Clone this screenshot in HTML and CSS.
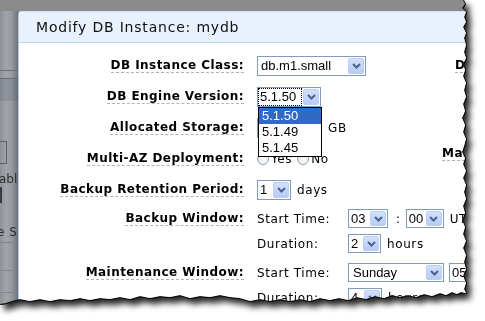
FILE: index.html
```html
<!DOCTYPE html>
<html>
  <head>
    <meta charset="utf-8">
    <title>Modify DB Instance: mydb</title>
    <link rel="stylesheet" href="styles.css">
  </head>
  <body>
    <div class="shot">
      <div class="paper">
        <div class="backdrop">
          <div class="bd-top"></div>
          <div class="bd-s59"></div>
          <div class="bd-rule"></div>
          <div class="bd-s7"></div>
          <div class="bd-rule"></div>
          <div class="bd-band"></div>
          <div class="bd-s40"></div>
          <div class="bd-box"></div>
          <div class="bd-s9"></div>
          <div class="bd-text">abl</div>
          <div class="bd-s1"></div>
          <div class="bd-bar"></div>
          <div class="bd-s23"></div>
          <div class="bd-text bd-text-s">e S</div>
          <div class="bd-s3"></div>
          <div class="bd-rule bd-rule-faint"></div>
          <div class="bd-s27"></div>
          <div class="bd-rule bd-rule-faint"></div>
          <div class="bd-s21"></div>
          <div class="bd-rule bd-rule-faint"></div>
        </div>

        <div class="stage">
          <div class="dialog">
            <div class="dialog-head">Modify DB Instance: mydb</div>
            <div class="dialog-body">

              <div class="row">
                <div class="lab"><span>DB Instance Class:</span></div>
                <div class="ctl">
                  <div class="sel sel-class">
                    <span class="sel-val">db.m1.small</span>
                    <span class="sel-btn"><svg width="9" height="6" viewBox="0 0 9 6"><polyline points="1,1 4.5,4.5 8,1" fill="none" stroke="#4d6185" stroke-width="2"/></svg></span>
                  </div>
                </div>
                <div class="far"><span class="far-indent">DB Parameter Group:</span></div>
              </div>

              <div class="row">
                <div class="lab"><span>DB Engine Version:</span></div>
                <div class="ctl">
                  <div class="drop">
                    <div class="sel sel-engine">
                      <span class="sel-val sel-focus">5.1.50</span>
                      <span class="sel-btn"><svg width="9" height="6" viewBox="0 0 9 6"><polyline points="1,1 4.5,4.5 8,1" fill="none" stroke="#4d6185" stroke-width="2"/></svg></span>
                    </div>
                    <ul class="list">
                      <li class="list-on">5.1.50</li>
                      <li>5.1.49</li>
                      <li>5.1.45</li>
                    </ul>
                  </div>
                </div>
              </div>

              <div class="row">
                <div class="lab"><span>Allocated Storage:</span></div>
                <div class="ctl">
                  <div class="field">5</div>
                  <span class="txt after">GB</span>
                </div>
              </div>

              <div class="row">
                <div class="lab"><span>Multi-AZ Deployment:</span></div>
                <div class="ctl">
                  <span class="radio"></span><span class="txt">Yes</span>
                  <span class="radio radio-next"></span><span class="txt">No</span>
                </div>
                <div class="far"><span class="far-up">Master Password:</span></div>
              </div>

              <div class="row">
                <div class="lab"><span>Backup Retention Period:</span></div>
                <div class="ctl wide">
                  <div class="sel sel-num">
                    <span class="sel-val">1</span>
                    <span class="sel-btn"><svg width="9" height="6" viewBox="0 0 9 6"><polyline points="1,1 4.5,4.5 8,1" fill="none" stroke="#4d6185" stroke-width="2"/></svg></span>
                  </div>
                  <span class="txt after">days</span>
                </div>
              </div>

              <div class="row multi multi-gap">
                <div class="lab"><span>Backup Window:</span></div>
                <div class="ctl wide stack">
                  <div class="sub">
                    <span class="txt sublab">Start Time:</span>
                    <div class="sel sel-sm sel-hh">
                      <span class="sel-val">03</span>
                      <span class="sel-btn"><svg width="9" height="6" viewBox="0 0 9 6"><polyline points="1,1 4.5,4.5 8,1" fill="none" stroke="#4d6185" stroke-width="2"/></svg></span>
                    </div>
                    <span class="txt colon">:</span>
                    <div class="sel sel-sm sel-mm">
                      <span class="sel-val">00</span>
                      <span class="sel-btn"><svg width="9" height="6" viewBox="0 0 9 6"><polyline points="1,1 4.5,4.5 8,1" fill="none" stroke="#4d6185" stroke-width="2"/></svg></span>
                    </div>
                    <span class="txt after">UTC</span>
                  </div>
                  <div class="sub">
                    <span class="txt sublab">Duration:</span>
                    <div class="sel sel-sm sel-dur">
                      <span class="sel-val">2</span>
                      <span class="sel-btn"><svg width="9" height="6" viewBox="0 0 9 6"><polyline points="1,1 4.5,4.5 8,1" fill="none" stroke="#4d6185" stroke-width="2"/></svg></span>
                    </div>
                    <span class="txt after">hours</span>
                  </div>
                </div>
              </div>

              <div class="row multi">
                <div class="lab"><span>Maintenance Window:</span></div>
                <div class="ctl wide stack">
                  <div class="sub">
                    <span class="txt sublab">Start Time:</span>
                    <div class="sel sel-sm sel-day">
                      <span class="sel-val">Sunday</span>
                      <span class="sel-btn"><svg width="9" height="6" viewBox="0 0 9 6"><polyline points="1,1 4.5,4.5 8,1" fill="none" stroke="#4d6185" stroke-width="2"/></svg></span>
                    </div>
                    <div class="sel sel-sm sel-hh sel-next">
                      <span class="sel-val">05</span>
                      <span class="sel-btn"><svg width="9" height="6" viewBox="0 0 9 6"><polyline points="1,1 4.5,4.5 8,1" fill="none" stroke="#4d6185" stroke-width="2"/></svg></span>
                    </div>
                  </div>
                  <div class="sub">
                    <span class="txt sublab">Duration:</span>
                    <div class="sel sel-sm sel-dur4">
                      <span class="sel-val">4</span>
                      <span class="sel-btn"><svg width="9" height="6" viewBox="0 0 9 6"><polyline points="1,1 4.5,4.5 8,1" fill="none" stroke="#4d6185" stroke-width="2"/></svg></span>
                    </div>
                    <span class="txt after">hours</span>
                  </div>
                </div>
              </div>

            </div>
          </div>
        </div>
      </div>
    </div>
  </body>
</html>
```

FILE: styles.css
```css
html, body {
  margin: 0;
}
body {
  width: 485px;
  height: 321px;
  overflow: hidden;
  background-color: #fff;
  font-family: "DejaVu Sans", Verdana, sans-serif;
  color: #000;
}

/* torn paper screenshot */
.shot {
  width: 478px;
  height: 308px;
  filter: drop-shadow(1px 0 0 #111) drop-shadow(0 1px 0 #111) drop-shadow(4px 5px 3px rgba(0, 0, 0, 0.85));
}
.paper {
  width: 478px;
  height: 308px;
  display: flex;
  overflow: hidden;
  clip-path: polygon(0 0, 463px 0, 465px 4px, 462px 8px, 466px 12px, 464px 17px, 466px 22px, 463px 27px, 466px 33px, 464px 38px, 466px 45px, 464px 52px, 466px 58px, 463px 64px, 465px 70px, 463px 76px, 466px 83px, 464px 90px, 466px 97px, 463px 104px, 465px 111px, 462px 118px, 465px 125px, 463px 132px, 466px 139px, 464px 146px, 462px 152px, 465px 158px, 463px 164px, 466px 171px, 463px 178px, 466px 185px, 464px 192px, 466px 199px, 463px 206px, 465px 213px, 462px 220px, 465px 227px, 463px 234px, 466px 241px, 463px 248px, 466px 255px, 464px 262px, 466px 269px, 463px 276px, 466px 283px, 464px 289px, 466px 293px, 461px 292px, 457px 294px, 452px 292px, 446px 295px, 440px 293px, 432px 296px, 424px 294px, 416px 297px, 408px 295px, 400px 297px, 392px 295px, 384px 298px, 375px 296px, 366px 299px, 357px 297px, 348px 300px, 339px 298px, 330px 300px, 320px 298px, 310px 301px, 300px 299px, 290px 301px, 280px 299px, 270px 301px, 260px 299px, 250px 301px, 240px 298px, 230px 297px, 220px 295px, 210px 297px, 200px 296px, 190px 298px, 180px 295px, 170px 297px, 160px 296px, 150px 298px, 140px 296px, 130px 299px, 120px 297px, 110px 299px, 100px 298px, 90px 300px, 80px 298px, 70px 300px, 60px 299px, 50px 301px, 40px 299px, 30px 301px, 20px 299px, 12px 301px, 6px 303px, 0 304px);
}

/* page behind the dialog */
.backdrop {
  flex: 0 0 18px;
  width: 18px;
  display: flex;
  flex-direction: column;
  overflow: hidden;
  background: linear-gradient(to right, #8e9195, #a1a4a8 35%, #979a9e 65%, #6d7074);
}
.bd-top { height: 11px; background-color: #8b8b8b; }
.bd-s1 { height: 1px; }
.bd-s3 { height: 3px; }
.bd-s7 { height: 7px; }
.bd-s9 { height: 9px; }
.bd-s21 { height: 21px; }
.bd-s23 { height: 23px; }
.bd-s27 { height: 27px; }
.bd-s40 { height: 40px; }
.bd-s59 { height: 59px; }
.bd-rule { height: 1px; background-color: #6a6e72; }
.bd-rule-faint { background-color: #83878b; }
.bd-band {
  height: 22px;
  background-color: rgba(70, 85, 110, 0.18);
}
.bd-box {
  width: 6px;
  height: 21px;
  border: 1px solid #5f6367;
  border-left: none;
}
.bd-text {
  height: 13px;
  line-height: 13px;
  margin-left: -1px;
  font-family: "DejaVu Sans", sans-serif;
  font-size: 12px;
  color: #2b2e31;
  white-space: nowrap;
}
.bd-text-s {
  margin-left: -3px;
  letter-spacing: 0.5px;
}
.bd-bar {
  width: 2px;
  height: 16px;
  background-color: #3a3d40;
}

/* dialog */
.stage {
  flex: 1;
  min-width: 0;
  padding-top: 11px;
  overflow: hidden;
  background-color: #8b8b8b;
}
.dialog {
  width: 640px;
  height: 100%;
  box-sizing: border-box;
  background-color: #fff;
  border-left: 1px solid #a9ccee;
  border-top: 1px solid #d4e4f5;
  border-top-left-radius: 4px;
}
.dialog-head {
  height: 30px;
  line-height: 30px;
  padding-left: 17px;
  background-color: #e8f1fc;
  border-bottom: 1px solid #bcd7f1;
  font-size: 14px;
  letter-spacing: 0.8px;
  color: #111;
}
.dialog-body {
  padding-top: 7px;
}

.row {
  display: grid;
  grid-template-columns: 225px 172px 1fr;
  column-gap: 13px;
  height: 31px;
  align-items: center;
}
.multi {
  height: auto;
  align-items: start;
  padding-top: 1px;
}
.multi-gap {
  padding-bottom: 3px;
}
.lab {
  display: flex;
  justify-content: flex-end;
  align-items: center;
}
.multi .lab {
  height: 25px;
}
.lab span, .far span {
  font-size: 12px;
  font-weight: bold;
  letter-spacing: 0.45px;
  line-height: 14px;
  white-space: nowrap;
  border-bottom: 1px dashed #b4b4b4;
}
.far {
  display: flex;
  align-items: center;
}
.far-indent {
  margin-left: 13px;
}
.far-up {
  margin-top: -10px;
}
.ctl {
  display: flex;
  align-items: center;
  white-space: nowrap;
}
.wide {
  grid-column: 2 / 4;
}
.stack {
  flex-direction: column;
  align-items: stretch;
}
.sub {
  height: 25px;
  display: flex;
  align-items: center;
}

.txt {
  font-size: 12px;
  letter-spacing: 0.6px;
  line-height: 14px;
}
.after {
  margin-left: 6px;
}
.sublab {
  width: 91px;
  flex: 0 0 91px;
}
.colon {
  margin: 0 5px 0 8px;
}

/* fake XP combo boxes */
.sel {
  display: flex;
  align-items: center;
  height: 20px;
  box-sizing: border-box;
  padding: 1px;
  border: 1px solid #7f9db9;
  background-color: #fff;
  font-family: "Liberation Sans", Arial, sans-serif;
  font-size: 13px;
}
.sel-sm {
  height: 19px;
}
.sel-val {
  flex: 1;
  padding-left: 1px;
  line-height: 16px;
}
.sel-focus {
  outline: 1px dotted #000;
  outline-offset: 0;
  margin-right: 2px;
}
.sel-btn {
  flex: 0 0 16px;
  width: 16px;
  height: 16px;
  box-sizing: border-box;
  display: flex;
  align-items: center;
  justify-content: center;
  border: 1px solid #bccdf4;
  border-radius: 2px;
  background: linear-gradient(#d2e0fd, #b7cbf8);
}
.sel-sm .sel-btn {
  height: 15px;
}
.sel-class { width: 109px; }
.sel-class .sel-val { padding-left: 2px; }
.sel-engine { width: 64px; }
.sel-num { width: 34px; }
.sel-hh { width: 40px; }
.sel-mm { width: 38px; }
.sel-dur { width: 33px; }
.sel-dur4 { width: 34px; }
.sel-day { width: 96px; }
.sel-day .sel-val { padding-left: 3px; }
.sel-next { margin-left: 5px; }

.drop {
  position: relative;
}
.list {
  position: absolute;
  top: 100%;
  left: 1px;
  width: 64px;
  box-sizing: border-box;
  margin: 0;
  padding: 0;
  list-style: none;
  border: 1px solid #000;
  background-color: #fff;
  font-family: "Liberation Sans", Arial, sans-serif;
  font-size: 13px;
  z-index: 2;
}
.list li {
  height: 16px;
  line-height: 16px;
  padding-left: 3px;
}
.list .list-on {
  background-color: #316ac5;
  color: #fff;
}

.field {
  width: 65px;
  height: 20px;
  box-sizing: border-box;
  border: 1px solid #7f9db9;
  padding-left: 3px;
  font-family: "Liberation Sans", Arial, sans-serif;
  font-size: 13px;
  line-height: 18px;
}

.radio {
  display: inline-block;
  width: 12px;
  height: 12px;
  box-sizing: border-box;
  margin-right: 2px;
  border: 1px solid #8ba3bd;
  border-radius: 50%;
  background: radial-gradient(circle at 60% 60%, #fff, #dcdcd6);
}
.radio-next {
  margin-left: 5px;
}
```
